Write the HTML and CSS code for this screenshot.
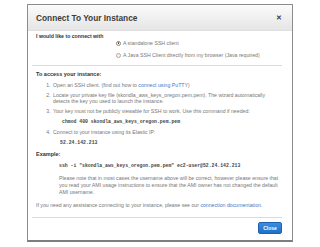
FILE: index.html
```
<!DOCTYPE html>
<html lang="en">

<head>
    <meta charset="UTF-8">
    <link rel="stylesheet" href="styles.css">
    <title>Connect To Your Instance</title>
</head>

<body>
    <div class="modal">
        <div class="modal-header">
            <h1>Connect To Your Instance</h1>
            <span class="close-x">&#10005;</span>
        </div>
        <div class="modal-body">
            <div class="connect-label">I would like to connect with</div>
            <div class="options">
                <label class="option"><span class="radio checked"></span>A standalone SSH client</label>
                <label class="option"><span class="radio"></span>A Java SSH Client directly from my browser (Java required)</label>
            </div>
            <hr>
            <h2>To access your instance:</h2>
            <ol class="steps">
                <li>Open an SSH client. (find out how to <a href="#">connect using PuTTY</a>)</li>
                <li>Locate your private key file (skondla_aws_keys_oregon.pem.pem). The wizard automatically detects the key you used to launch the instance.</li>
                <li>Your key must not be publicly viewable for SSH to work. Use this command if needed:
                    <pre class="cmd">chmod 400 skondla_aws_keys_oregon.pem.pem</pre>
                </li>
                <li>Connect to your instance using its Elastic IP:
                    <pre class="cmd ip">52.24.142.213</pre>
                </li>
            </ol>
            <h2 class="example">Example:</h2>
            <pre class="cmd ssh">ssh -i "skondla_aws_keys_oregon.pem.pem" ec2-user@52.24.142.213</pre>
            <p class="note">Please note that in most cases the username above will be correct, however please ensure that you read your AMI usage instructions to ensure that the AMI owner has not changed the default AMI username.</p>
            <p class="help">If you need any assistance connecting to your instance, please see our <a href="#">connection documentation</a>.</p>
        </div>
        <div class="modal-footer">
            <button class="btn-close">Close</button>
        </div>
    </div>
</body>

</html>
```

FILE: styles.css
```
body {
    margin: 0;
    padding: 4px 0 0 27px;
    background-color: #ffffff;
    font-family: "Liberation Sans", Arial, sans-serif;
    font-size: 5.2px;
    color: #777777;
}

.modal {
    width: 264px;
    height: 235px;
    border: 1px solid #8c8c8c;
    border-bottom: 2px solid #7d7d7d;
    background-color: #ffffff;
    display: flex;
    flex-direction: column;
}

.modal-header {
    height: 25px;
    display: flex;
    align-items: center;
    justify-content: space-between;
    padding: 0 10px 0 8px;
    background: linear-gradient(#fbfbfb, #e5e5e5);
    border-bottom: 1px solid #dedede;
}

.modal-header h1 {
    margin: 0;
    font-size: 8.3px;
    font-weight: bold;
    color: #3c3c3c;
}

.close-x {
    font-size: 6.5px;
    font-weight: bold;
    color: #444444;
}

.modal-body {
    padding: 0 10px 0 8px;
    flex: 1;
}

.connect-label {
    margin-top: 2px;
    font-weight: bold;
    color: #333333;
    line-height: 6px;
}

.options {
    margin-left: 80px;
    display: flex;
    flex-direction: column;
    gap: 6px;
    margin-top: 1px;
}

.option {
    display: flex;
    align-items: center;
    line-height: 6px;
}

.radio {
    width: 3px;
    height: 3px;
    border: 0.5px solid #aaaaaa;
    border-radius: 50%;
    margin-right: 2px;
    background-color: #f4f4f4;
    display: flex;
    align-items: center;
    justify-content: center;
}

.radio.checked {
    border-color: #888888;
}

.radio.checked::after {
    content: "";
    width: 1.6px;
    height: 1.6px;
    border-radius: 50%;
    background-color: #444444;
}

hr {
    margin: 7px 0 0 -4px;
    border: none;
    border-top: 1px solid #dcdcdc;
}

h2 {
    margin: 5px 0 0 0;
    font-size: 5.5px;
    font-weight: bold;
    color: #333333;
    line-height: 6px;
}

.steps {
    margin: 6px 0 0 0;
    padding-left: 16px;
}

.steps li {
    line-height: 5.6px;
    margin-bottom: 4.4px;
    padding-left: 1px;
}

a {
    color: #4a76c4;
    text-decoration: none;
}

.cmd {
    margin: 5px 0 0 9px;
    font-family: "Liberation Mono", "Courier New", monospace;
    font-size: 4.8px;
    font-weight: bold;
    color: #444444;
    line-height: 6px;
}

.cmd.ip {
    margin-top: 5px;
    margin-left: 7px;
}

h2.example {
    margin-top: 2px;
}

.cmd.ssh {
    margin: 6px 0 0 23px;
}

.note {
    margin: 6px 0 0 23px;
    line-height: 7px;
}

.help {
    margin: 6px 0 0 0;
    line-height: 7px;
}

.modal-footer {
    margin: 0 10px 0 4px;
    padding: 4px 0 6px 0;
    border-top: 1px solid #dcdcdc;
    display: flex;
    justify-content: flex-end;
}

.btn-close {
    width: 24px;
    height: 12px;
    padding: 0;
    border: 1px solid #1d62b0;
    border-radius: 2px;
    background: linear-gradient(#3a8ee0, #1f6fc8);
    color: #ffffff;
    font-family: "Liberation Sans", Arial, sans-serif;
    font-size: 5px;
    font-weight: bold;
}
```
